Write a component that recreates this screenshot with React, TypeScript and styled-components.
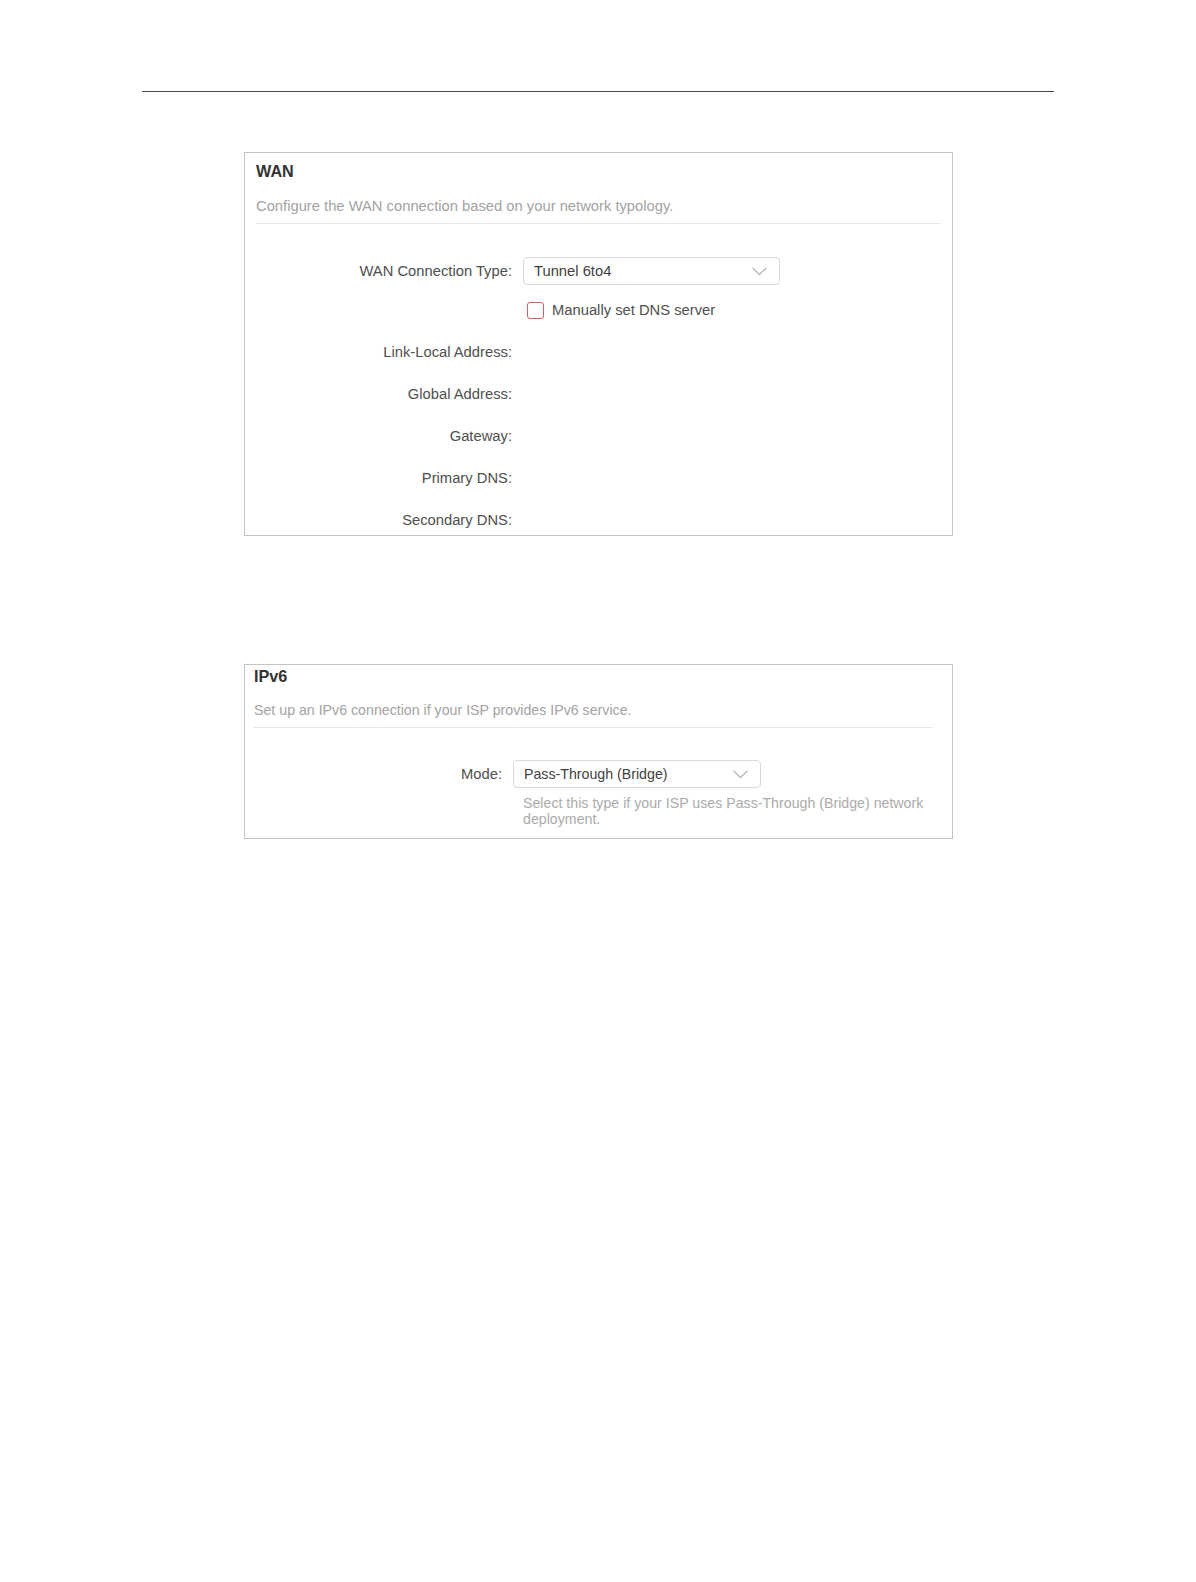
import React from 'react';
import styled, { createGlobalStyle } from 'styled-components';

const GlobalStyle = createGlobalStyle`
  html, body {
    margin: 0;
    padding: 0;
    background: #fff;
  }
  body {
    font-family: "Liberation Sans", Arial, sans-serif;
    color: #4d4d4d;
  }
`;

interface InfoRow {
  label: string;
}

const wanInfo: InfoRow[] = [
  { label: 'Link-Local Address:' },
  { label: 'Global Address:' },
  { label: 'Gateway:' },
  { label: 'Primary DNS:' },
  { label: 'Secondary DNS:' },
];

const Chevron: React.FC = () => (
  <svg width="15" height="9" viewBox="0 0 15 9" fill="none">
    <path d="M1 1.2 L7.5 7.5 L14 1.2" stroke="#b8b8b8" strokeWidth="1.4" strokeLinecap="round" strokeLinejoin="round" />
  </svg>
);

const App: React.FC = () => {
  return (
    <Page>
      <GlobalStyle />
      <TopRule />

      <Card $height={384} $padLeft={11} $padRight={11} $padTop={8} $fontSize={14.75}>
        <Title>WAN</Title>
        <Subtitle $gap={15}>Configure the WAN connection based on your network typology.</Subtitle>
        <Form $padTop={29} $labelWidth={256}>
          <Row $height={36}>
            <Label>WAN Connection Type:</Label>
            <Select $width={257}>
              <SelectText>Tunnel 6to4</SelectText>
              <Chevron />
            </Select>
          </Row>
          <Row $height={42.5}>
            <span />
            <CheckLine>
              <CheckBox />
              <CheckText>Manually set DNS server</CheckText>
            </CheckLine>
          </Row>
          {wanInfo.map(({ label }) => (
            <Row key={label} $height={41.9}>
              <Label>{label}</Label>
              <span />
            </Row>
          ))}
        </Form>
      </Card>

      <Card $padLeft={9} $padRight={19} $padTop={1} $padBottom={11} $gapTop={128} $fontSize={14.2}>
        <Title>IPv6</Title>
        <Subtitle $gap={14}>Set up an IPv6 connection if your ISP provides IPv6 service.</Subtitle>
        <Form $padTop={32} $labelWidth={248}>
          <Row $height={28}>
            <Label>Mode:</Label>
            <Select $width={248}>
              <SelectText>Pass-Through (Bridge)</SelectText>
              <Chevron />
            </Select>
          </Row>
          <Row>
            <span />
            <Helper>Select this type if your ISP uses Pass-Through (Bridge) network deployment.</Helper>
          </Row>
        </Form>
      </Card>
    </Page>
  );
};

const Page = styled.div`
  padding-top: 91px;
  padding-bottom: 40px;
`;

const TopRule = styled.div`
  margin-left: 142px;
  width: 912px;
  height: 1px;
  background: #4a4a4a;
  margin-bottom: 60px;
`;

const Card = styled.section<{
  $height?: number;
  $padLeft: number;
  $padRight: number;
  $padTop: number;
  $padBottom?: number;
  $gapTop?: number;
  $fontSize: number;
}>`
  margin-left: 244px;
  margin-top: ${p => p.$gapTop ?? 0}px;
  width: 709px;
  box-sizing: border-box;
  ${p => (p.$height ? `height: ${p.$height}px; overflow: hidden;` : '')}
  border: 1px solid #c4c4c4;
  padding: ${p => p.$padTop}px ${p => p.$padRight}px ${p => p.$padBottom ?? 0}px ${p => p.$padLeft}px;
  background: #fff;
  font-size: ${p => p.$fontSize}px;
`;

const Title = styled.h2`
  margin: 0;
  font-size: 16.2px;
  line-height: 20px;
  font-weight: 700;
  color: #333;
`;

const Subtitle = styled.p<{ $gap: number }>`
  margin: ${p => p.$gap}px 0 0;
  padding-bottom: 7px;
  line-height: 20px;
  color: #a3a3a3;
  border-bottom: 1px solid #e6e6e6;
`;

const Form = styled.div<{ $padTop: number; $labelWidth: number }>`
  padding-top: ${p => p.$padTop}px;
  display: grid;
  grid-template-columns: ${p => p.$labelWidth}px 1fr;
  column-gap: 11px;
`;

const Row = styled.div<{ $height?: number }>`
  grid-column: 1 / -1;
  display: grid;
  grid-template-columns: subgrid;
  align-items: center;
  ${p => (p.$height ? `height: ${p.$height}px;` : '')}
`;

const Label = styled.span`
  text-align: right;
  font-size: 14.75px;
  line-height: 20px;
  color: #4f4f4f;
  white-space: nowrap;
`;

const Select = styled.div<{ $width: number }>`
  width: ${p => p.$width}px;
  height: 28px;
  box-sizing: border-box;
  border: 1px solid #d9d9d9;
  border-radius: 4px;
  display: flex;
  align-items: center;
  justify-content: space-between;
  padding: 0 12px 0 10px;
`;

const SelectText = styled.span`
  color: #3f3f3f;
`;

const CheckLine = styled.label`
  display: flex;
  align-items: center;
  gap: 8px;
  padding-left: 4px;
`;

const CheckBox = styled.span`
  width: 17px;
  height: 17px;
  box-sizing: border-box;
  border: 1.5px solid #e05a5a;
  border-radius: 3px;
  background: #fff;
`;

const CheckText = styled.span`
  color: #4f4f4f;
`;

const Helper = styled.p`
  margin: 6.5px 0 0;
  padding-left: 10px;
  font-size: 14.2px;
  line-height: 16px;
  color: #ababab;
`;

export default App;
